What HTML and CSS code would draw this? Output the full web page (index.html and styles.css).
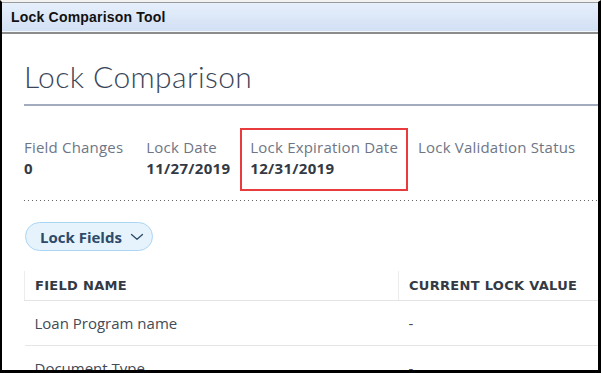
FILE: index.html
```html
<!DOCTYPE html>
<html>
<head>
<meta charset="utf-8">
<link rel="stylesheet" href="styles.css">
</head>
<body>
<div class="window">
  <div class="titlebar">Lock Comparison Tool</div>
  <div class="content">
    <h1 class="heading">Lock Comparison</h1>
    <div class="stats">
      <div class="stat">
        <div class="stat-label">Field Changes</div>
        <div class="stat-value">0</div>
      </div>
      <div class="stat">
        <div class="stat-label">Lock Date</div>
        <div class="stat-value">11/27/2019</div>
      </div>
      <div class="stat stat-highlight">
        <div class="stat-label">Lock Expiration Date</div>
        <div class="stat-value">12/31/2019</div>
      </div>
      <div class="stat">
        <div class="stat-label">Lock Validation Status</div>
        <div class="stat-value"></div>
      </div>
    </div>
    <div class="dotted"></div>
    <div class="pill-row">
      <button class="pill">Lock Fields
        <svg class="chev" width="14" height="8" viewBox="0 0 14 8"><path d="M1.5 1.5 L7 6.3 L12.5 1.5" fill="none" stroke="#2d4a68" stroke-width="1.3" stroke-linecap="round" stroke-linejoin="round"/></svg>
      </button>
    </div>
    <table class="fields">
      <thead>
        <tr><th class="col-name">FIELD NAME</th><th class="col-val">CURRENT LOCK VALUE</th></tr>
      </thead>
      <tbody>
        <tr><td>Loan Program name</td><td>-</td></tr>
        <tr><td>Document Type</td><td>-</td></tr>
      </tbody>
    </table>
  </div>
</div>
</body>
</html>
```
FILE: styles.css
```css
html, body { margin: 0; padding: 0; background: #fff; }
.window {
  width: 601px;
  height: 373px;
  box-sizing: border-box;
  border-top: 2px solid #f2f2f2;
  border-left: 2px solid #000;
  border-right: 3px solid #000;
  border-bottom: 3px solid #000;
  display: flex;
  flex-direction: column;
  overflow: hidden;
  background: #fff;
}
.titlebar {
  flex: none;
  height: 29px;
  box-sizing: border-box;
  border-top: 1px solid #9a9a9a;
  background: linear-gradient(#e6effc, #d2e0f4);
  font-family: "Liberation Sans", Arial, sans-serif;
  font-weight: bold;
  font-size: 14px;
  letter-spacing: 0.2px;
  color: #111;
  padding: 6px 0 0 9px;
  box-shadow: 0 1px 0 #f4f7fb, 0 3px 0 #8c8c8c;
  margin-bottom: 3px;
}
.content {
  flex: 1;
  overflow: hidden;
  padding-left: 22px;
  font-family: "Open Sans", Lato, sans-serif;
}
.heading {
  margin: 24px 0 0 0;
  font-family: Lato, "Open Sans", sans-serif;
  font-size: 30px;
  line-height: 36px;
  font-weight: 300;
  letter-spacing: 0.4px;
  color: #3b4658;
  padding-bottom: 10px;
  border-bottom: 2px solid #a3abbe;
}
.stats {
  display: flex;
  margin: 22px 0 0 -10px;
}
.stat {
  border: 2px solid transparent;
  padding: 9px 8px 11px 8px;
}
.stat:first-child { padding-right: 11px; }
.stat-highlight { border-color: #e83b3e; }
.stat-label {
  font-size: 15px;
  line-height: 17px;
  letter-spacing: 0.2px;
  color: #6e7686;
  white-space: nowrap;
}
.stat-value {
  margin-top: 2px;
  font-size: 15px;
  line-height: 20px;
  font-weight: 700;
  letter-spacing: 0.3px;
  color: #333a44;
  min-height: 20px;
}
.dotted {
  margin-top: 9px;
  height: 1px;
  background-image: linear-gradient(to right, #666 1px, transparent 1px);
  background-size: 4px 1px;
}
.pill-row { margin-top: 21px; }
.pill {
  display: inline-flex;
  align-items: center;
  height: 29px;
  width: 128px;
  box-sizing: border-box;
  border: 1px solid #aad6f4;
  border-radius: 15px;
  background: #e6f3fd;
  font-family: "Open Sans", Lato, sans-serif;
  font-weight: 700;
  font-size: 15px;
  color: #2d4a68;
  padding: 0 0 0 14px;
  gap: 8px;
  margin-left: 1px;
}
.chev { display: block; margin-top: 1px; }
.fields {
  margin-top: 20px;
  width: 600px;
  border-collapse: collapse;
  table-layout: fixed;
}
.fields th {
  text-align: left;
  font-family: "DejaVu Sans", sans-serif;
  font-weight: 700;
  font-size: 13px;
  letter-spacing: 0.3px;
  color: #333a44;
  height: 29px;
  padding: 0 0 0 10px;
  border-left: 1px solid #ececec;
  border-bottom: 1px solid #e4e4e4;
}
.fields th.col-name { width: 363px; }
.fields td {
  font-size: 15px;
  color: #444b55;
  height: 44px;
  padding: 0 0 0 10px;
  border-bottom: 1px solid #e6e6e6;
}
```
